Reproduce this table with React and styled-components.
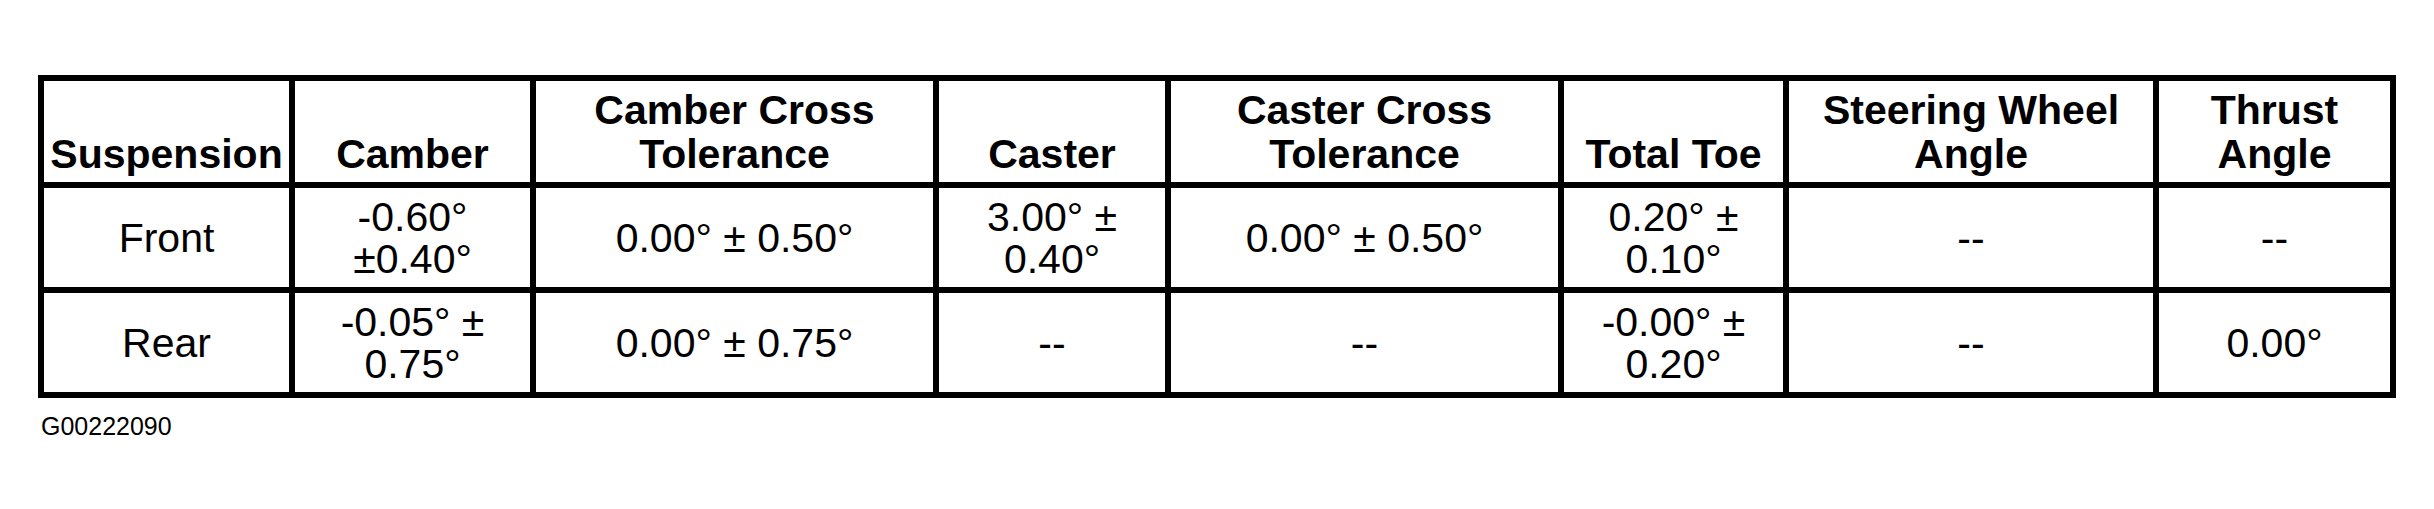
import React from "react";
import styled, { createGlobalStyle } from "styled-components";

const GlobalStyle = createGlobalStyle`
  html, body {
    margin: 0;
    padding: 0;
    background: #ffffff;
  }
  body {
    font-family: "Liberation Sans", Arial, sans-serif;
    color: #000000;
  }
`;

const Page = styled.div`
  padding: 75px 0 0 38px;
`;

const Grid = styled.div`
  display: grid;
  grid-template-columns: 245px 235px 397px 226px 387px 219px 364px 231px;
  grid-template-rows: 101px 99px 99px;
  gap: 6px;
  padding: 6px;
  background: #000000;
  width: max-content;
`;

const HeadCell = styled.div`
  background: #ffffff;
  display: flex;
  align-items: flex-end;
  justify-content: center;
  text-align: center;
  padding: 0 3px 6px;
  font-weight: 700;
  font-size: 41px;
  line-height: 44px;
`;

const Cell = styled.div`
  background: #ffffff;
  display: flex;
  align-items: center;
  justify-content: center;
  text-align: center;
  padding: 0 ${(p) => (p.$tight ? 8 : 4)}px;
  font-size: 41px;
  line-height: 42px;
`;

const Footnote = styled.div`
  margin: 14px 0 0 3px;
  font-size: 25px;
  line-height: 28px;
`;

const headers = [
  "Suspension",
  "Camber",
  "Camber Cross Tolerance",
  "Caster",
  "Caster Cross Tolerance",
  "Total Toe",
  "Steering Wheel Angle",
  "Thrust Angle",
];

const rows = [
  [
    "Front",
    "-0.60° ±0.40°",
    "0.00° ± 0.50°",
    "3.00° ± 0.40°",
    "0.00° ± 0.50°",
    "0.20° ± 0.10°",
    "--",
    "--",
  ],
  [
    "Rear",
    "-0.05° ± 0.75°",
    "0.00° ± 0.75°",
    "--",
    "--",
    "-0.00° ± 0.20°",
    "--",
    "0.00°",
  ],
];

export default function App() {
  return (
    <>
      <GlobalStyle />
      <Page>
        <Grid>
          {headers.map((h) => (
            <HeadCell key={h}>{h}</HeadCell>
          ))}
          {rows.map((r, ri) =>
            r.map((c, ci) => (
              <Cell key={`${ri}-${ci}`} $tight={ci === 1}>
                {c}
              </Cell>
            ))
          )}
        </Grid>
        <Footnote>G00222090</Footnote>
      </Page>
    </>
  );
}
